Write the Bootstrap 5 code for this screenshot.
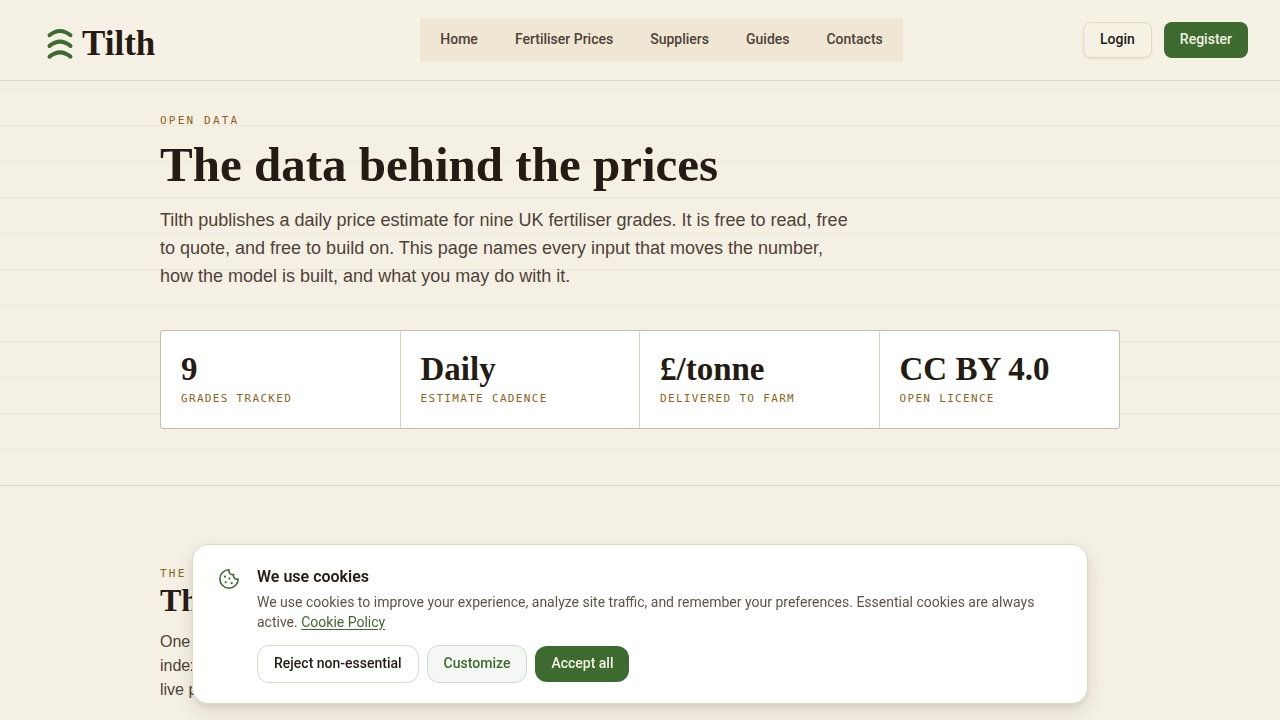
<!DOCTYPE html>
<html lang="en">
<head>
<meta charset="utf-8">
<meta name="viewport" content="width=device-width, initial-scale=1">
<title>Tilth – Open data</title>
<link href="https://cdn.jsdelivr.net/npm/bootstrap@5.3.0/dist/css/bootstrap.min.css" rel="stylesheet">
<style>
  :root { --ink: #241b12; --soft: #4d4237; --green: #3d6b2f; --ochre: #8a6420; --paper: #f6f1e5; --rule: #d9d4c6; }
  body { font-family: Roboto, "Liberation Sans", Arial, sans-serif; background: #f5f0e4; color: var(--ink); }
  h1, h2, .serif { font-family: "Liberation Serif", "Times New Roman", serif; font-weight: 600; }
  .site-header { background: var(--paper); border-bottom: 1px solid var(--rule); padding: 18px 32px; min-height: 81px; }
  .brand-link { color: var(--ink); padding-left: 12px; gap: 6px; flex: 0 1 208px; }
  .brand-link .serif { font-size: 35px; line-height: 36px; padding-top: 8px; }
  .main-nav { background: #efe6d4; border-radius: 3px; height: 44px; padding: 0 2px; gap: 1px; }
  .main-nav a { color: var(--soft); font-size: 14px; font-weight: 500; line-height: 20px; padding: 11px 18px 13px; }
  .btn { font-size: 14px; line-height: 20px; font-weight: 500; }
  .head-btn { border-radius: 8px; padding: 6px 16px 8px; height: 36px; }
  .btn-login { border-color: #e0d8c0; color: var(--ink); box-shadow: 0 1px 2px rgba(36,27,18,.08); }
  .btn-green, .btn-green:hover { background: var(--green); color: #f5f0e4; border: 0; }
  .hero { border-bottom: 1px solid var(--rule); padding: 32px 0 56px;
    background: repeating-linear-gradient(0deg, transparent 0 35px, rgba(36,27,18,.04) 35px 36px); }
  .wrap { max-width: 992px; padding: 0 16px; }
  .label-mono { font-family: "DejaVu Sans Mono", monospace; font-size: 11px; line-height: 16px; color: var(--ochre); text-transform: uppercase; letter-spacing: .12em; }
  .eyebrow { letter-spacing: .2em; }
  h1 { font-size: 49px; line-height: 52px; margin: 10px 0 15px; }
  .copy { font-family: "Liberation Sans", Arial, sans-serif; color: var(--soft); max-width: 700px; line-height: 24px; }
  .lead-copy { font-size: 18px; line-height: 28px; margin-bottom: 40px; }
  .stats { background: #fff; border: 1px solid #c4bcae; border-radius: 3px; }
  .stats > div { padding: 20px 20px 21px; }
  .stats > div:not(:last-child) { border-right: 1px solid #d8d1c4; }
  .stats .serif { font-size: 33px; line-height: 36px; margin-bottom: 4px; }
  .inputs { padding: 80px 0 64px; }
  h2 { font-size: 32px; line-height: 36px; margin: 0 0 12px; }
  .cookie-wrap { padding: 0 16px 16px; }
  .cookie-box { max-width: 896px; background: #fff; border: 1px solid #e0d8c0; border-radius: 16px; padding: 20px 25px; gap: 17px; box-shadow: 0 8px 20px rgba(36,27,18,.1), 0 3px 6px rgba(36,27,18,.08); }
  .cookie-box svg { margin-top: 3px; }
  .cookie-title { font-family: inherit; font-size: 16px; line-height: 24px; font-weight: 600; margin: 0 0 3px; }
  .cookie-text { font-size: 14px; line-height: 20px; color: #5f5346; margin-bottom: 13px; }
  .cookie-text a { color: var(--green); text-underline-offset: 2px; }
  .cookie-box .btn { border-radius: 12px; padding: 7px 16px 9px; }
  .btn-reject { border-color: #e0d8c0; color: var(--ink); }
  .btn-custom { border-color: #d0dacd; background: #f5f7f4; color: var(--green); }
</style>
</head>
<body>
<header class="site-header d-flex align-items-start justify-content-between">
  <a class="brand-link d-flex align-items-start text-decoration-none" href="#">
    <svg width="32" height="44" viewBox="0 0 32 44" fill="none" stroke="#3d6b2f" stroke-width="4" stroke-linecap="round" aria-hidden="true">
      <path d="M5.500 17.200q10.500-8.500 21 0M5.500 27.900q10.500-8.500 21 0M5.500 38.600q10.500-8.500 21 0"/>
    </svg>
    <span class="serif">Tilth</span>
  </a>
  <nav class="main-nav d-flex" aria-label="Main">
    <a class="text-decoration-none" href="#">Home</a>
    <a class="text-decoration-none" href="#">Fertiliser Prices</a>
    <a class="text-decoration-none" href="#">Suppliers</a>
    <a class="text-decoration-none" href="#">Guides</a>
    <a class="text-decoration-none" href="#">Contacts</a>
  </nav>
  <div class="d-flex mt-1" style="gap:12px">
    <button class="btn head-btn btn-login" type="button">Login</button>
    <button class="btn head-btn btn-green" type="button">Register</button>
  </div>
</header>
<main>
  <section class="hero">
    <div class="wrap mx-auto">
      <div class="label-mono eyebrow">Open data</div>
      <h1>The data behind the prices</h1>
      <p class="copy lead-copy">Tilth publishes a daily price estimate for nine UK fertiliser grades. It is free to read, free to quote, and free to build on. This page names every input that moves the number, how the model is built, and what you may do with it.</p>
      <div class="stats row row-cols-4 g-0">
        <div><div class="serif">9</div><div class="label-mono">Grades tracked</div></div>
        <div><div class="serif">Daily</div><div class="label-mono">Estimate cadence</div></div>
        <div><div class="serif">£/tonne</div><div class="label-mono">Delivered to farm</div></div>
        <div><div class="serif">CC BY 4.0</div><div class="label-mono">Open licence</div></div>
      </div>
    </div>
  </section>
  <section class="inputs">
    <div class="wrap mx-auto">
      <div class="label-mono eyebrow">The</div>
      <h2>Th</h2>
      <p class="copy">One<br>index<br>live p</p>
    </div>
  </section>
</main>
<div class="cookie-wrap fixed-bottom">
  <section class="cookie-box d-flex align-items-start mx-auto" aria-labelledby="cookie-title">
    <svg class="flex-shrink-0" width="22" height="22" viewBox="0 0 24 24" fill="none" stroke="#3d6b2f" stroke-width="1.700" stroke-linecap="round" stroke-linejoin="round" aria-hidden="true">
      <path d="M12 2a10 10 0 1 0 10 10 4 4 0 0 1-5-5 4 4 0 0 1-5-5"/>
      <path stroke-width="2.400" d="M7.600 9.500v.01M12.400 11.500v.01M8.400 15.600v.01M14.900 16.500v.01"/>
    </svg>
    <div>
      <h2 class="cookie-title" id="cookie-title">We use cookies</h2>
      <p class="cookie-text">We use cookies to improve your experience, analyze site traffic, and remember your preferences. Essential cookies are always active. <a href="#">Cookie Policy</a></p>
      <div class="d-flex flex-wrap align-items-center gap-2">
        <button class="btn btn-reject" type="button">Reject non-essential</button>
        <button class="btn btn-custom" type="button">Customize</button>
        <button class="btn btn-green" type="button">Accept all</button>
      </div>
    </div>
  </section>
</div>
<script src="https://cdn.jsdelivr.net/npm/bootstrap@5.3.0/dist/js/bootstrap.bundle.min.js"></script>
</body>
</html>
